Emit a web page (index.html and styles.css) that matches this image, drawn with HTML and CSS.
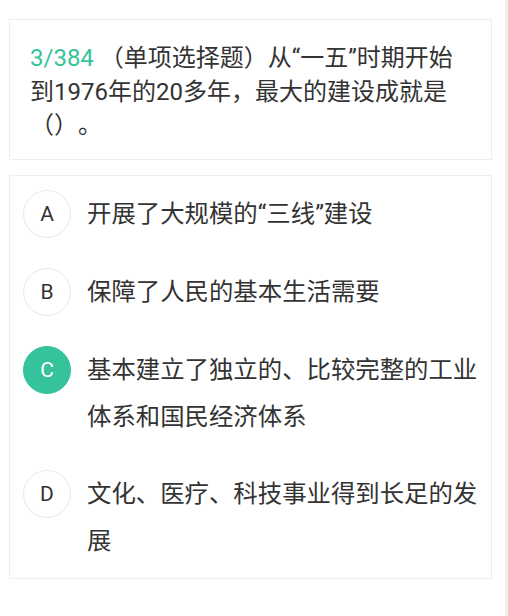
FILE: index.html
```html
<!DOCTYPE html>
<html lang="zh-CN">
<head>
<meta charset="utf-8">
<title>单项选择题</title>
<link rel="stylesheet" href="styles.css">
</head>
<body>
<div class="page">
  <main class="main">
    <section class="card question">
      <span class="qnum">3/384</span> （单项选择题）从“一五”时期开始到1976年的20多年，最大的建设成就是（）。
    </section>
    <section class="card options">
      <div class="option">
        <span class="badge">A</span>
        <span class="text">开展了大规模的“三线”建设</span>
      </div>
      <div class="option">
        <span class="badge">B</span>
        <span class="text">保障了人民的基本生活需要</span>
      </div>
      <div class="option selected">
        <span class="badge">C</span>
        <span class="text">基本建立了独立的、比较完整的工业体系和国民经济体系</span>
      </div>
      <div class="option">
        <span class="badge">D</span>
        <span class="text">文化、医疗、科技事业得到长足的发展</span>
      </div>
    </section>
  </main>
  <div class="track"></div>
</div>
</body>
</html>
```
FILE: styles.css
```css
html, body {
  margin: 0;
  padding: 0;
  background: #ffffff;
}

body {
  font-family: Roboto, "Noto Sans CJK SC", sans-serif;
  color: #333333;
  text-spacing-trim: space-all;
}

.page {
  display: flex;
  min-height: 616px;
}

.main {
  flex: 1;
  padding: 19px 13px 0 9px;
}

.track {
  width: 3px;
  background: #efefef;
}

.card {
  border: 1px solid #eeeeee;
  background: #ffffff;
}

.question {
  padding: 22px 20px 16px 20px;
  font-size: 24px;
  line-height: 33.5px;
  color: #333333;
}

.qnum {
  color: #35c39b;
}

.options {
  margin-top: 15px;
  padding: 14px 10px 14px 13px;
  display: flex;
  flex-direction: column;
  gap: 30px;
}

.option {
  display: flex;
  align-items: flex-start;
  gap: 16px;
}

.badge {
  flex: 0 0 auto;
  box-sizing: border-box;
  width: 48px;
  height: 48px;
  border-radius: 50%;
  border: 1px solid #e8e8e8;
  display: flex;
  align-items: center;
  justify-content: center;
  font-size: 21px;
  color: #333333;
}

.selected .badge {
  background: #35c39b;
  border-color: #35c39b;
  color: #ffffff;
}

.text {
  flex: 1;
  font-size: 24.4px;
  line-height: 47px;
  color: #333333;
}
```
